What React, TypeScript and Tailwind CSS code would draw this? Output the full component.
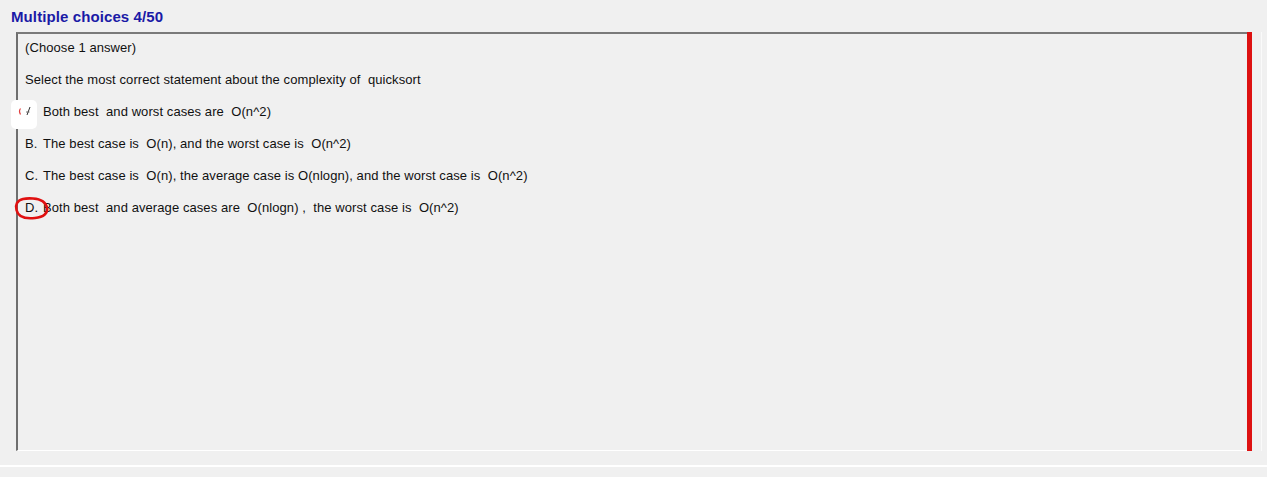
import React from "react";

const lines: [string, string][] = [
  ["", "(Choose 1 answer)"],
  ["", "Select the most correct statement about the complexity of  quicksort"],
  ["A.", "Both best  and worst cases are  O(n^2)"],
  ["B.", "The best case is  O(n), and the worst case is  O(n^2)"],
  ["C.", "The best case is  O(n), the average case is O(nlogn), and the worst case is  O(n^2)"],
  ["D.", "Both best  and average cases are  O(nlogn) ,  the worst case is  O(n^2)"],
];

export default function App() {
  return (
    <div
      className="relative w-[1267px] h-[477px] overflow-hidden bg-[#f0f0f0] text-black"
      style={{ fontFamily: '"Liberation Sans", Arial, sans-serif' }}
    >
      <div className="pl-[11px] pt-[8px] text-[15px] leading-[18px] font-bold tracking-[0.1px] text-[#1a1aa6]">
        Multiple choices 4/50
      </div>
      <div className="mt-[6px] ml-[16px] flex h-[419px] w-[1246px] border-r border-r-[#fafafa]">
        <div className="h-[419px] w-[1231px] border-l-2 border-t-2 border-b border-l-[#6e6e6e] border-t-[#7a7a7a] border-b-[#ffffff] pt-[6px] pl-[7px]">
          {lines.map(([label, t], i) => (
            <div
              key={i}
              className="mb-[16px] h-[16px] whitespace-pre text-[13px] leading-[16px] tracking-[0.08px] text-[#111]"
            >
              {label && <span className="inline-block w-[18px]">{label}</span>}
              {t}
            </div>
          ))}
        </div>
        <div className="h-[419px] w-[5px] bg-[#dd1111]" />
      </div>
      <div className="mt-[14px] h-[2px] w-full bg-white" />

      {/* white cover patch over option A */}
      <div className="absolute left-[11px] top-[100px] h-[29px] w-[26px] rounded-[5px] bg-white">
        <svg width="26" height="29" viewBox="0 0 26 29">
          <path d="M9.5 8.5 Q7.5 11 9.5 14.5" stroke="#e04040" strokeWidth="1.2" fill="none" />
          <path d="M16 15 L19 7" stroke="#333" strokeWidth="1" fill="none" />
          <path d="M15 12 L18.5 12" stroke="#555" strokeWidth="0.8" fill="none" />
        </svg>
      </div>

      {/* red hand-drawn circle around D */}
      <svg className="absolute left-[13px] top-[194px]" width="38" height="28" viewBox="0 0 38 28">
        <path
          d="M10 5 C 4 6.5, 2 11, 3.5 16 C 5 23, 13 25, 22 24 C 31 23, 35 19, 34 14 C 33 8.5, 28 5, 20 4.5 C 16 4.2, 13 4.3, 10 5"
          stroke="#e01010"
          strokeWidth="2.6"
          fill="none"
          strokeLinecap="round"
        />
      </svg>
    </div>
  );
}
